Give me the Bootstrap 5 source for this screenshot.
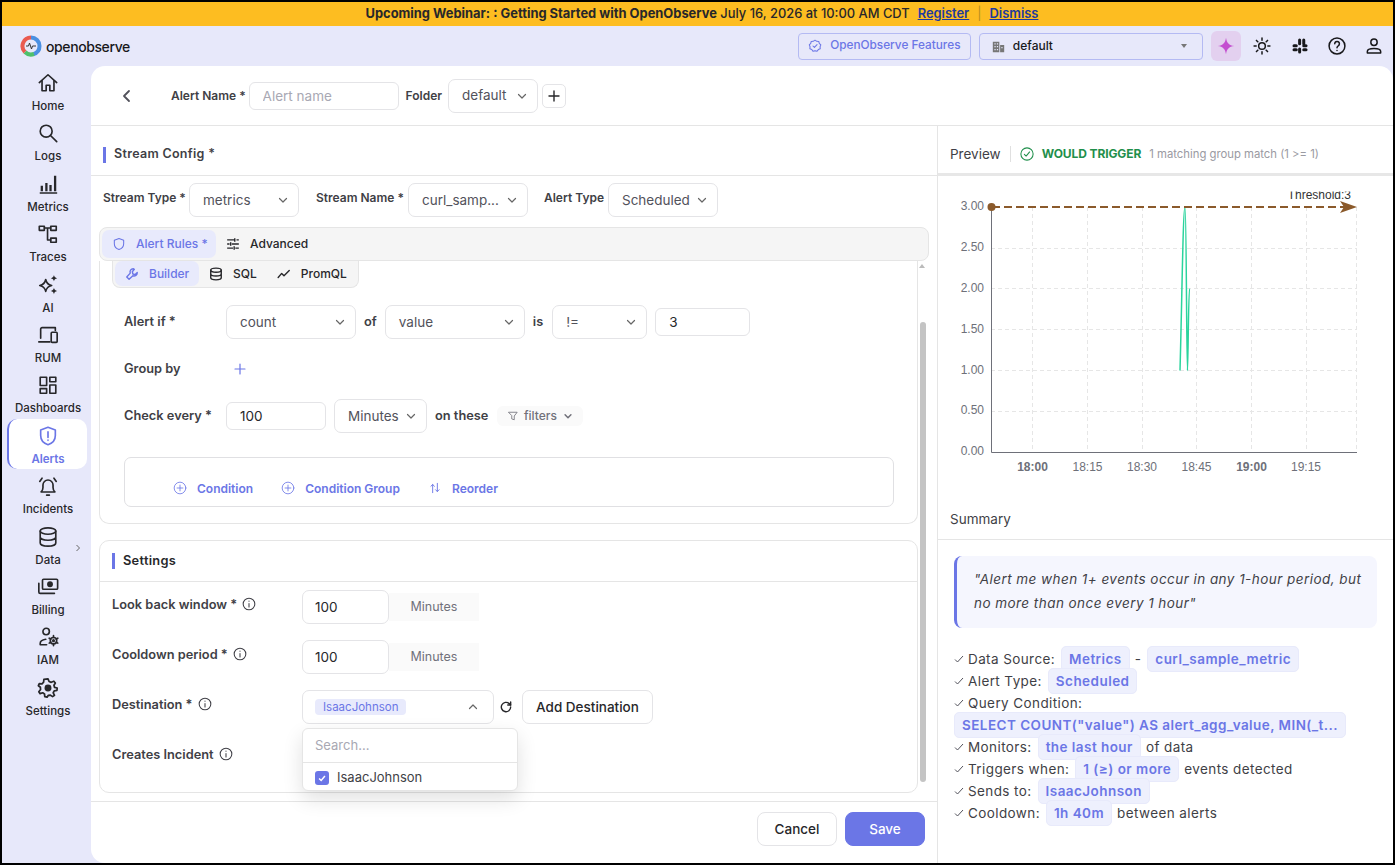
<!DOCTYPE html>
<html lang="en">
<head>
    <meta charset="UTF-8">
    <meta name="viewport" content="width=device-width, initial-scale=1.0">
    <title>Add Alert - OpenObserve</title>
    <link href="https://cdn.jsdelivr.net/npm/bootstrap@5.3.0/dist/css/bootstrap.min.css" rel="stylesheet">
    <style>
        html, body { margin: 0; height: 100%; background: #000; overflow: hidden; }
        body { font-family: Inter, "Liberation Sans", sans-serif; font-size: 13px; color: #3f3f46; }
        svg { display: block; flex: none; }
        .ic { fill: none; stroke: currentColor; stroke-width: 1.8; stroke-linecap: round; stroke-linejoin: round; }

        .app-frame { width: 1395px; height: 865px; border: 2px solid #000; background: #e7e8fa; overflow: hidden; }
        .promo-bar { height: 24px; padding-left: 9px; background: #fdbd21; color: #27272a; font-size: 12.9px; font-weight: 500; }
        .promo-bar b { font-weight: 700; }
        .promo-bar a { color: #1e3a9e; font-weight: 600; }
        .promo-sep { color: #b98d22; font-weight: 400; }

        .top-row { height: 40px; padding-left: 18px; }
        .brand-name { font-size: 14px; font-weight: 500; color: #18181b; letter-spacing: -.4px; margin-left: 4px; }
        .feature-btn { width: 173px; height: 27px; border: 1px solid #b4baf3; border-radius: 4px; color: #6b76e6; font-size: 11.8px; font-weight: 500; margin-right: 8px; }
        .org-pick { width: 224px; height: 27px; border: 1px solid #b4baf3; border-radius: 4px; padding: 0 15px 0 12px; font-size: 12px; font-weight: 500; color: #18181b; margin-right: 8px; }
        .org-pick svg { margin-right: 8px; }
        .caret-down { width: 0; height: 0; border-left: 3.5px solid transparent; border-right: 3.5px solid transparent; border-top: 4px solid #777; }
        .ai-btn { width: 30px; height: 30px; border-radius: 6px; background: #e3d0ef; margin-right: 3px; }
        .top-icon { width: 37.3px; color: #18181b; }

        .side-rail { width: 89px; flex: none; }
        .rail-item { width: 80px; height: 50.4px; margin-left: 5px; color: #27272a; font-size: 11.5px; font-weight: 500; line-height: 14px; position: relative; border-radius: 10px; border-left: 2px solid transparent; padding-top: 6px; }
        .rail-item svg { margin-bottom: 5px; }
        .rail-item.on { background: #fff; color: #6b76e6; font-weight: 600; border-left-color: #6b76e6; }
        .rail-more { position: absolute; right: 5px; top: 24px; }

        .main-sheet { background: #fff; border-radius: 14px 14px 0 14px; min-width: 0; }
        .sheet-head { height: 60px; border-bottom: 1px solid #e5e5e5; padding-left: 29px; }
        .fld-label { font-size: 12px; font-weight: 600; color: #3f3f46; white-space: nowrap; }
        .plain-input.form-control { height: 28px; border: 1px solid #e4e4e7; border-radius: 6px; font-size: 13.5px; padding: 0 13px; color: #27272a; box-shadow: none; }
        .plain-input.form-control::placeholder { color: #a8a8b3; }
        .pick-box { height: 34px; border: 1px solid #e4e4e7; border-radius: 7px; background: #fff; font-size: 13.5px; color: #52525b; padding: 0 9px 0 13px; white-space: nowrap; }
        .pick-box svg { stroke-width: 1.2; }
        .plus-btn { width: 24px; height: 24px; border: 1px solid #e4e4e7; border-radius: 5px; color: #27272a; }

        .left-pane { width: 847px; flex: none; border-right: 1px solid #e5e5e5; position: relative; }
        .block-head { height: 50px; border-bottom: 1px solid #e5e5e5; padding-left: 12px; padding-top: 8px; font-size: 12.5px; font-weight: 600; letter-spacing: .3px; }
        .accent-tick { width: 3px; height: 16px; background: #6b76e6; margin-right: 8px; }
        .stream-row { height: 51px; padding-left: 12px; padding-top: 7px; }
        .stream-label { margin-top: 5.5px; }
        .tab-strip { height: 34px; margin: 0 8px; padding: 2px; background: #f5f5f5; border: 1px solid #e5e5e5; border-radius: 8px; }
        .tab-link { height: 28px; border-radius: 7px; padding: 0 10px; font-size: 12px; font-weight: 500; color: #27272a; gap: 10px; white-space: nowrap; }
        .tab-link.on { background: #e8eafc; color: #6b76e6; }
        .rule-card { height: 263px; margin: 0 19px 0 8px; border: 1px solid #e5e5e5; border-top: 0; border-radius: 0 0 10px 10px; padding: 0 24px 0 24px; }
        .rule-card .fld-label, .set-label.fld-label { font-size: 12.8px; }
        .query-tabs { width: 247px; height: 27px; margin-left: -12px; padding: 0 2px 2px; background: #f5f5f5; border: 1px solid #e5e5e5; border-top: 0; border-radius: 0 0 8px 8px; margin-bottom: 17px; }
        .query-tabs .tab-link { height: 25px; }
        .rule-row { height: 34px; margin-bottom: 13px; }
        .rule-label { width: 102px; flex: none; }
        .filter-chip { width: 86px; height: 20px; border-radius: 6px; background: #fafafa; color: #71717a; font-size: 12px; font-weight: 500; gap: 6px; }
        .cond-box { height: 50px; margin-top: 24px; width: 770px; border: 1px solid #e0e0e3; border-radius: 7px; padding: 22px 0 0 48px; color: #6b76e6; font-size: 12px; font-weight: 600; }
        .cond-link { gap: 10px; margin-right: 28px; }

        .settings-card.card { height: 253px; margin: 16px 19px 0 8px; border: 1px solid #e5e5e5; border-radius: 10px; }
        .settings-head { height: 41px; border-bottom: 1px solid #e5e5e5; padding-left: 12px; font-size: 12.8px; font-weight: 600; color: #27272a; letter-spacing: .3px; }
        .settings-body { padding: 8px 12px 0; }
        .set-row { height: 34px; margin-bottom: 16px; }
        .set-label { width: 190px; flex: none; padding-top: 5px; height: 34px; gap: 5px; align-items: flex-start; }
        .set-label svg { margin-top: 2px; }
        .num-input.form-control { width: 87px; height: 34px; border: 1px solid #e4e4e7; border-radius: 7px; font-size: 13.5px; padding: 0 12px; color: #27272a; box-shadow: none; }
        .unit-tag { width: 90px; height: 28px; background: #fafafa; color: #71717a; font-size: 12.5px; }
        .dest-chip { background: #e8eafc; color: #6b76e6; border-radius: 4px; height: 16px; font-size: 11.5px; padding: 0 8px; line-height: 16px; }
        .dest-pick { width: 192px; padding-left: 12px; padding-right: 14px; }
        .add-dest.btn { width: 131px; height: 34px; margin-left: 9px; border: 1px solid #e4e4e7; border-radius: 7px; font-size: 13.5px; font-weight: 500; color: #27272a; padding: 0; }
        .dest-menu { position: absolute; left: 202px; top: 187px; width: 216px; height: 63px; background: #fff; border: 1px solid #e5e5e5; border-radius: 6px; box-shadow: 0 8px 20px rgba(0,0,0,.12); z-index: 5; }
        .menu-search { height: 34px; border-bottom: 1px solid #e5e5e5; padding-left: 12px; color: #a8a8b3; font-size: 13px; }
        .menu-item { height: 28px; padding: 1px 0 0 12px; gap: 8px; font-size: 13px; color: #3f3f46; }
        .menu-check { width: 14px; height: 14px; border-radius: 3px; background: #6b76e6; }

        .foot-row { height: 62px; margin-top: 8px; border-top: 1px solid #e5e5e5; padding: 10px 12px 0 0; gap: 8px; }
        .foot-row .btn { width: 80px; height: 34px; padding: 0; border-radius: 8px; font-size: 13.5px; font-weight: 500; }
        .btn-cancel { border: 1px solid #e4e4e7; color: #27272a; }
        .btn-save { background: #6b76e6; border: 1px solid #6b76e6; color: #fff; }

        .scroll-track { position: absolute; right: 11px; top: 196px; width: 6px; height: 460px; background: #c4c4c4; border-radius: 3px; }
        .scroll-up { position: absolute; right: 12px; top: 138px; width: 0; height: 0; border-left: 3px solid transparent; border-right: 3px solid transparent; border-bottom: 4px solid #bbb; }

        .right-pane { min-width: 0; }
        .pane-head { height: 50px; border-bottom: 3px solid #e7e7e7; padding-left: 12px; padding-top: 9px; }
        .pane-title { font-size: 13.5px; font-weight: 400; color: #3f3f46; }
        .head-sep { width: 1px; height: 16px; background: #e0e0e0; margin: 0 9px; }
        .trigger-ok { color: #1f8f4b; font-size: 12px; font-weight: 700; margin-left: 8px; letter-spacing: -.1px; }
        .trigger-note { color: #9a9aa2; font-size: 11.3px; margin-left: 8px; }
        .chart-wrap { height: 321px; }
        .chart-wrap text { font-family: "Liberation Sans", sans-serif; font-size: 12px; fill: #6e7079; }
        .summary-head { height: 43px; border-bottom: 1px solid #e5e5e5; padding-left: 12px; padding-top: 3px; }
        .quote-box { margin: 16px 16px 0; height: 72px; padding: 11px 14px 0 17px; background: #f5f6fe; border-left: 3px solid #6b76e6; border-radius: 8px; font-style: italic; font-size: 13.5px; line-height: 24px; letter-spacing: .45px; color: #3f3f46; }
        .sum-list { margin: 20px 0 0 16px; font-size: 13.5px; letter-spacing: .4px; color: #3f3f46; }
        .sum-line { height: 22px; white-space: nowrap; }
        .sum-line svg { margin-right: 4px; }
        .sum-chip { background: #eef0fd; border: 1px solid #e8eafb; color: #6b76e6; font-weight: 600; border-radius: 5px; padding: 2px 7px; margin: 0 5px 0 6px; letter-spacing: .45px; }
        .sum-chip.wide { margin-left: 0; }
    </style>
</head>
<body>
    <div class="app-frame d-flex flex-column">
        <div class="promo-bar d-flex align-items-center justify-content-center gap-2 flex-none">
            <span><b>Upcoming Webinar: : Getting Started with OpenObserve</b> July 16, 2026 at 10:00 AM CDT</span>
            <a href="#">Register</a>
            <span class="promo-sep">|</span>
            <a href="#">Dismiss</a>
        </div>

        <div class="top-row d-flex align-items-center">
            <svg width="22" height="22" viewBox="0 0 22 22"><path d="M11 2.500a8.500 8.500 0 0 1 8.500 8.500" fill="none" stroke="#4a90e2" stroke-width="4"/><path d="M19.500 11a8.500 8.500 0 0 1-6 8.100" fill="none" stroke="#4a90e2" stroke-width="4"/><path d="M14 19a8.500 8.500 0 0 1-9 -2" fill="none" stroke="#4fc06b" stroke-width="4"/><path d="M5 17A8.500 8.500 0 0 1 11 2.500" fill="none" stroke="#ea5a4f" stroke-width="4"/><path d="M6 11h2.500l1-3 2 6 1-3H16" fill="none" stroke="#333" stroke-width="1"/></svg>
            <span class="brand-name">openobserve</span>
            <div class="ms-auto d-flex align-items-center feature-btn justify-content-center gap-2">
                <svg width="14" height="14" viewBox="0 0 24 24" class="ic"><path d="M12 2l3 2 3.500.2.800 3.400 2.700 2.400-1.300 3.300.3 3.500-3.300 1.300L15.500 21 12 20l-3.500 1-2-2.900-3.300-1.300.3-3.500L2.200 10l2.500-2.400.8-3.400L9 4z"/><path d="M8.500 12l2.500 2.500 4.500-5"/></svg>
                <span>OpenObserve Features</span>
            </div>
            <div class="org-pick d-flex align-items-center">
                <svg width="13" height="13" viewBox="0 0 16 16" fill="#777"><path d="M1 2h8v13H1zM10 6h5v9h-5z"/><path d="M3 4h1.500v1.500H3zM6 4h1.500v1.500H6zM3 7.500h1.500V9H3zM6 7.500h1.500V9H6zM3 11h1.500v1.500H3zM6 11h1.500v1.500H6zM11.500 8.500H13V10h-1.500z" fill="#e7e8fa"/></svg>
                <span>default</span>
                <span class="caret-down ms-auto"></span>
            </div>
            <div class="ai-btn d-flex align-items-center justify-content-center">
                <svg width="18" height="18" viewBox="0 0 24 24"><path d="M12 1c1 7 4 10 11 11-7 1-10 4-11 11-1-7-4-10-11-11 7-1 10-4 11-11z" fill="#c44ed0"/></svg>
            </div>
            <div class="top-icon d-flex justify-content-center">
                <svg width="20" height="20" viewBox="0 0 24 24" class="ic"><circle cx="12" cy="12" r="4"/><path d="M12 2.500v2.500M12 19v2.500M2.500 12H5M19 12h2.500M5.300 5.300L7 7M17 17l1.700 1.700M5.300 18.700L7 17M17 7l1.700-1.700"/></svg>
            </div>
            <div class="top-icon d-flex justify-content-center">
                <svg width="18" height="18" viewBox="0 0 24 24" fill="#18181b"><rect x="9.500" y="2" width="4" height="9" rx="2"/><rect x="2" y="9.500" width="7" height="4" rx="2"/><rect x="15" y="2" width="4" height="9" rx="2"/><rect x="15" y="9.500" width="7" height="4" rx="2"/><rect x="9.500" y="14" width="4" height="8" rx="2"/><rect x="2" y="15" width="7" height="4" rx="2"/><rect x="15" y="15" width="7" height="4" rx="2"/></svg>
            </div>
            <div class="top-icon d-flex justify-content-center">
                <svg width="20" height="20" viewBox="0 0 24 24" class="ic"><circle cx="12" cy="12" r="9.500"/><path d="M9.300 9.300a2.800 2.800 0 1 1 4.300 2.400c-1 .7-1.600 1.200-1.600 2.500"/><path d="M12 17.300v.2"/></svg>
            </div>
            <div class="top-icon d-flex justify-content-center">
                <svg width="20" height="20" viewBox="0 0 24 24" class="ic"><circle cx="12" cy="7.500" r="3.800"/><path d="M4 20.500v-2c0-2 3-3.500 8-3.500s8 1.500 8 3.500v2z"/></svg>
            </div>
        </div>

        <div class="d-flex flex-grow-1" style="min-height:0">
            <nav class="side-rail">
                <div class="rail-item d-flex flex-column align-items-center">
                    <svg width="22" height="22" viewBox="0 0 24 24" class="ic"><path d="M2.500 11.500L12 3l9.500 8.500"/><path d="M5.500 9.500V20.500h4.500v-6h4v6h4.500V9.500"/></svg>Home
                </div>
                <div class="rail-item d-flex flex-column align-items-center">
                    <svg width="22" height="22" viewBox="0 0 24 24" class="ic"><circle cx="10" cy="10" r="6.500"/><path d="M15 15l6.500 6.500"/></svg>Logs
                </div>
                <div class="rail-item d-flex flex-column align-items-center">
                    <svg width="22" height="22" viewBox="0 0 24 24" fill="#27272a"><path d="M3 21h19v1.600H3zM4 14h2.500v6H4zM9 11h2.500v9H9zM13.500 13H16v7h-2.500zM18.500 3H21v17h-2.500z"/></svg>Metrics
                </div>
                <div class="rail-item d-flex flex-column align-items-center">
                    <svg width="22" height="22" viewBox="0 0 24 24" class="ic"><rect x="2.500" y="3.500" width="5.500" height="4.500"/><rect x="15" y="3.500" width="6" height="4.500"/><rect x="15" y="16.500" width="6" height="4.500"/><path d="M8 5.500h7M11.500 5.500V18.500H15"/></svg>Traces
                </div>
                <div class="rail-item d-flex flex-column align-items-center">
                    <svg width="22" height="22" viewBox="0 0 24 24"><path d="M9.500 6c.8 4 2.500 5.700 6.500 6.500-4 .8-5.700 2.500-6.500 6.500-.8-4-2.500-5.700-6.500-6.500C7 11.700 8.700 10 9.500 6z" fill="none" stroke="#27272a" stroke-width="1.800" stroke-linejoin="round"/><path d="M18.500 1c.4 2 1.300 3 3.500 3.500-2.200.5-3.100 1.500-3.500 3.500-.4-2-1.300-3-3.500-3.500 2.200-.5 3.100-1.500 3.500-3.500zM18.500 15c.4 2 1.300 3 3.500 3.500-2.200.5-3.100 1.500-3.500 3.500-.4-2-1.300-3-3.500-3.500 2.200-.5 3.100-1.500 3.500-3.500z" fill="#27272a"/></svg>AI
                </div>
                <div class="rail-item d-flex flex-column align-items-center">
                    <svg width="22" height="22" viewBox="0 0 24 24" class="ic"><path d="M4 15.500V5.500c0-.8.700-1.500 1.500-1.500H20v3"/><path d="M2 19.500h12"/><rect x="15.500" y="9" width="6.500" height="11" rx="1"/></svg>RUM
                </div>
                <div class="rail-item d-flex flex-column align-items-center">
                    <svg width="22" height="22" viewBox="0 0 24 24" class="ic"><rect x="3.500" y="3.500" width="7" height="9"/><rect x="14" y="3.500" width="6.500" height="5"/><rect x="3.500" y="16" width="7" height="5"/><rect x="14" y="12" width="6.500" height="9"/></svg>Dashboards
                </div>
                <div class="rail-item on d-flex flex-column align-items-center">
                    <svg width="22" height="22" viewBox="0 0 24 24" class="ic"><path d="M12 2.500l8 3v6c0 5-3.300 8.500-8 10-4.700-1.500-8-5-8-10v-6z"/><path d="M12 7.500v6M12 16.500v.2"/></svg>Alerts
                </div>
                <div class="rail-item d-flex flex-column align-items-center">
                    <svg width="22" height="22" viewBox="0 0 24 24" class="ic"><path d="M4.500 18.500c1.500-1.500 2-2.500 2-5V11a5.500 5.500 0 0 1 11 0v2.500c0 2.500.5 3.500 2 5z"/><path d="M10.500 22h3M5.500 3.500L3 7M18.500 3.500L21 7"/></svg>Incidents
                </div>
                <div class="rail-item d-flex flex-column align-items-center">
                    <svg width="22" height="22" viewBox="0 0 24 24" class="ic"><ellipse cx="12" cy="5.500" rx="8.500" ry="3.500"/><path d="M3.500 5.500v13c0 2 3.800 3.500 8.500 3.500s8.500-1.500 8.500-3.500v-13M3.500 12c0 2 3.800 3.500 8.500 3.500s8.500-1.500 8.500-3.500"/></svg>Data
                    <svg class="rail-more" width="8" height="8" viewBox="0 0 8 8"><path d="M2.500 1L5.500 4 2.500 7" fill="none" stroke="#666" stroke-width="1"/></svg>
                </div>
                <div class="rail-item d-flex flex-column align-items-center">
                    <svg width="22" height="22" viewBox="0 0 24 24" class="ic"><rect x="6" y="3.500" width="16.500" height="11" rx="1.200"/><circle cx="14.200" cy="9" r="2.300" fill="#27272a"/><path d="M2 8v9.500c0 1 .7 1.500 1.500 1.500H19"/></svg>Billing
                </div>
                <div class="rail-item d-flex flex-column align-items-center">
                    <svg width="22" height="22" viewBox="0 0 24 24" class="ic"><circle cx="10" cy="6" r="3.500"/><path d="M3.500 20.500v-1.500c0-2.500 2.500-4 6-4.500M3.500 20.500h7"/><circle cx="18" cy="16" r="3.500"/><circle cx="18" cy="16" r=".8"/><path d="M18 10.500v2M18 19.500v2M13.300 13.300l1.700 1M21 17.700l1.700 1M13.300 18.700l1.700-1M21 14.300l1.700-1"/></svg>IAM
                </div>
                <div class="rail-item d-flex flex-column align-items-center">
                    <svg width="22" height="22" viewBox="0 0 24 24"><path d="M12 2l1.200 2.900 2.300.9L18.400 4.600 20 6.500 18.500 9l.6 2.300L22 12l-.2 2.500-3 .6-1.100 2.100 1.400 2.800-2.100 1.400-2.400-1.600-2.400.3L11 22l-2.500-.5-.3-3-2-1.300-2.800 1L2 16l1.900-2.400-.2-2.400L1.500 9.500l1-2.300 3 .2 1.700-1.700L7.500 2.700z" fill="none" stroke="#27272a" stroke-width="1.900" stroke-linejoin="round"/><circle cx="12" cy="12" r="3.800" fill="#27272a"/></svg>Settings
                </div>
            </nav>

            <main class="main-sheet flex-grow-1 d-flex flex-column">
                <div class="sheet-head d-flex align-items-center">
                    <svg width="14" height="14" viewBox="0 0 14 14" class="ic" style="color:#52525b"><path d="M9 2L4 7l5 5"/></svg>
                    <span class="fld-label" style="margin-left:37px">Alert Name *</span>
                    <input class="form-control plain-input" style="width:150px;margin-left:3px" placeholder="Alert name">
                    <span class="fld-label" style="margin:0 6px 0 7px">Folder</span>
                    <div class="pick-box d-flex align-items-center justify-content-between" style="width:90px"><span>default</span><svg width="12" height="12" viewBox="0 0 12 12" class="ic" style="color:#666"><path d="M2.500 4.500L6 8l3.500-3.500"/></svg></div>
                    <div class="plus-btn d-flex align-items-center justify-content-center ms-1"><svg width="12" height="12" viewBox="0 0 12 12" class="ic" style="stroke-width:1.400"><path d="M6 1v10M1 6h10"/></svg></div>
                </div>

                <div class="d-flex flex-grow-1" style="min-height:0">
                    <section class="left-pane">
                        <div class="block-head d-flex align-items-center"><span class="accent-tick"></span>Stream Config *</div>

                        <div class="stream-row d-flex align-items-start">
                            <span class="fld-label stream-label" style="width:86px">Stream Type *</span>
                            <div class="pick-box d-flex align-items-center justify-content-between" style="width:110px"><span>metrics</span><svg width="12" height="12" viewBox="0 0 12 12" class="ic" style="color:#666"><path d="M2.500 4.500L6 8l3.500-3.500"/></svg></div>
                            <span class="fld-label stream-label" style="margin-left:17px;width:92px">Stream Name *</span>
                            <div class="pick-box d-flex align-items-center justify-content-between gap-1" style="width:120px"><span>curl_samp...</span><svg width="12" height="12" viewBox="0 0 12 12" class="ic" style="color:#666"><path d="M2.500 4.500L6 8l3.500-3.500"/></svg></div>
                            <span class="fld-label stream-label" style="margin-left:16px;width:64px">Alert Type</span>
                            <div class="pick-box d-flex align-items-center justify-content-between" style="width:110px"><span>Scheduled</span><svg width="12" height="12" viewBox="0 0 12 12" class="ic" style="color:#666"><path d="M2.500 4.500L6 8l3.500-3.500"/></svg></div>
                        </div>

                        <div class="tab-strip d-flex">
                            <div class="tab-link on d-flex align-items-center" style="width:114px">
                                <svg width="14" height="14" viewBox="0 0 24 24" class="ic"><path d="M12 2.500l8 3v6c0 5-3.300 8.500-8 10-4.700-1.500-8-5-8-10v-6z"/></svg><span>Alert Rules *</span>
                            </div>
                            <div class="tab-link d-flex align-items-center">
                                <svg width="14" height="14" viewBox="0 0 24 24" class="ic" style="stroke-linecap:butt;stroke-width:2.400"><path d="M2 5h12M18 5h4M15 2v6M2 12h4M10 12h12M8 9v6M2 19h10M16 19h6M14 16v6"/></svg><span>Advanced</span>
                            </div>
                        </div>

                        <div class="rule-card">
                            <div class="query-tabs d-flex">
                                <div class="tab-link on d-flex align-items-center" style="width:84px">
                                    <svg width="14" height="14" viewBox="0 0 24 24" class="ic" style="stroke-width:2.400"><path d="M14 3a5.500 5.500 0 0 0-5 7.500L3 17l4 4 6.500-6A5.500 5.500 0 0 0 21 9.500l-3.500 3.500-4-1-1-4L16 4z"/></svg><span>Builder</span>
                                </div>
                                <div class="tab-link d-flex align-items-center">
                                    <svg width="14" height="14" viewBox="0 0 24 24" class="ic" style="stroke-width:2.400"><ellipse cx="12" cy="5.500" rx="9" ry="3.500"/><path d="M3 5.500v13c0 2 4 3.500 9 3.500s9-1.500 9-3.500v-13M3 12c0 2 4 3.500 9 3.500s9-1.500 9-3.500"/></svg><span>SQL</span>
                                </div>
                                <div class="tab-link d-flex align-items-center">
                                    <svg width="14" height="14" viewBox="0 0 24 24" class="ic" style="stroke-width:2.400"><path d="M2 18l6-7 4 4 9-9"/></svg><span>PromQL</span>
                                </div>
                            </div>

                            <div class="rule-row d-flex align-items-center">
                                <span class="fld-label rule-label">Alert if *</span>
                                <div class="pick-box d-flex align-items-center justify-content-between" style="width:130px"><span>count</span><svg width="12" height="12" viewBox="0 0 12 12" class="ic" style="color:#666"><path d="M2.500 4.500L6 8l3.500-3.500"/></svg></div>
                                <span class="fld-label" style="margin:0 8px">of</span>
                                <div class="pick-box d-flex align-items-center justify-content-between" style="width:140px"><span>value</span><svg width="12" height="12" viewBox="0 0 12 12" class="ic" style="color:#666"><path d="M2.500 4.500L6 8l3.500-3.500"/></svg></div>
                                <span class="fld-label" style="margin:0 9px 0 8px">is</span>
                                <div class="pick-box d-flex align-items-center justify-content-between" style="width:95px"><span>!=</span><svg width="12" height="12" viewBox="0 0 12 12" class="ic" style="color:#666"><path d="M2.500 4.500L6 8l3.500-3.500"/></svg></div>
                                <input class="form-control plain-input" style="width:95px;margin-left:8px" value="3">
                            </div>

                            <div class="rule-row d-flex align-items-center">
                                <span class="fld-label rule-label">Group by</span>
                                <svg width="12" height="12" viewBox="0 0 12 12" class="ic" style="color:#6b76e6;margin-left:8px;stroke-width:1.200"><path d="M6 1v10M1 6h10"/></svg>
                            </div>

                            <div class="rule-row d-flex align-items-center" style="margin-bottom:0">
                                <span class="fld-label rule-label">Check every *</span>
                                <input class="form-control plain-input" style="width:100px" value="100">
                                <div class="pick-box d-flex align-items-center justify-content-between ms-2" style="width:93px"><span>Minutes</span><svg width="12" height="12" viewBox="0 0 12 12" class="ic" style="color:#666"><path d="M2.500 4.500L6 8l3.500-3.500"/></svg></div>
                                <span class="fld-label" style="margin:0 9px 0 8px">on these</span>
                                <div class="filter-chip d-flex align-items-center justify-content-center">
                                    <svg width="10" height="10" viewBox="0 0 12 12" class="ic" style="stroke-width:1"><path d="M1 1.500h10L7.500 6v4.500l-3-1V6z"/></svg><span>filters</span><svg width="10" height="10" viewBox="0 0 12 12" class="ic"><path d="M2.500 4.500L6 8l3.500-3.500"/></svg>
                                </div>
                            </div>

                            <div class="cond-box d-flex">
                                <div class="cond-link d-flex align-items-start">
                                    <svg width="14" height="14" viewBox="0 0 24 24" class="ic" style="stroke-width:1.400;margin-top:1px"><circle cx="12" cy="12" r="10"/><path d="M12 7v10M7 12h10"/></svg><span>Condition</span>
                                </div>
                                <div class="cond-link d-flex align-items-start">
                                    <svg width="14" height="14" viewBox="0 0 24 24" class="ic" style="stroke-width:1.400;margin-top:1px"><circle cx="12" cy="12" r="10"/><path d="M12 7v10M7 12h10"/></svg><span>Condition Group</span>
                                </div>
                                <div class="cond-link d-flex align-items-start">
                                    <svg width="14" height="14" viewBox="0 0 24 24" class="ic" style="stroke-width:1.600;margin-top:1px"><path d="M8 20V6M5 9l3-3 3 3M16 4v14M13 15l3 3 3-3"/></svg><span>Reorder</span>
                                </div>
                            </div>
                        </div>

                        <div class="settings-card card position-relative">
                            <div class="settings-head d-flex align-items-center"><span class="accent-tick"></span>Settings</div>
                            <div class="settings-body">
                                <div class="set-row d-flex">
                                    <div class="set-label fld-label d-flex"><span>Look back window *</span><svg width="14" height="14" viewBox="0 0 24 24" class="ic"><circle cx="12" cy="12" r="10"/><path d="M12 11v6M12 7v.2"/></svg></div>
                                    <input class="form-control num-input" value="100">
                                    <div class="unit-tag d-flex align-items-center justify-content-center align-self-center">Minutes</div>
                                </div>
                                <div class="set-row d-flex">
                                    <div class="set-label fld-label d-flex"><span>Cooldown period *</span><svg width="14" height="14" viewBox="0 0 24 24" class="ic"><circle cx="12" cy="12" r="10"/><path d="M12 11v6M12 7v.2"/></svg></div>
                                    <input class="form-control num-input" value="100">
                                    <div class="unit-tag d-flex align-items-center justify-content-center align-self-center">Minutes</div>
                                </div>
                                <div class="set-row d-flex">
                                    <div class="set-label fld-label d-flex"><span>Destination *</span><svg width="14" height="14" viewBox="0 0 24 24" class="ic"><circle cx="12" cy="12" r="10"/><path d="M12 11v6M12 7v.2"/></svg></div>
                                    <div class="pick-box dest-pick d-flex align-items-center justify-content-between"><span class="dest-chip">IsaacJohnson</span><svg width="12" height="12" viewBox="0 0 12 12" class="ic" style="color:#666"><path d="M2.500 7.500L6 4l3.500 3.500"/></svg></div>
                                    <svg width="14" height="14" viewBox="0 0 24 24" class="ic align-self-center" style="margin-left:5px;stroke-width:2.400;color:#27272a"><path d="M20 12a8 8 0 1 1-2.500-5.800L20 8.500"/><path d="M20 3.500v5h-5"/></svg>
                                    <button class="btn add-dest" type="button">Add Destination</button>
                                </div>
                                <div class="set-row d-flex">
                                    <div class="set-label fld-label d-flex"><span>Creates Incident</span><svg width="14" height="14" viewBox="0 0 24 24" class="ic"><circle cx="12" cy="12" r="10"/><path d="M12 11v6M12 7v.2"/></svg></div>
                                </div>
                            </div>
                            <div class="dest-menu">
                                <div class="menu-search d-flex align-items-center">Search...</div>
                                <div class="menu-item d-flex align-items-center">
                                    <span class="menu-check d-flex align-items-center justify-content-center"><svg width="10" height="10" viewBox="0 0 12 12" fill="none" stroke="#fff" stroke-width="1.800"><path d="M2.500 6.500L5 9l4.500-5.500"/></svg></span>
                                    <span>IsaacJohnson</span>
                                </div>
                            </div>
                        </div>

                        <div class="foot-row d-flex align-items-start justify-content-end">
                            <button class="btn btn-cancel" type="button">Cancel</button>
                            <button class="btn btn-save" type="button">Save</button>
                        </div>

                        <span class="scroll-up"></span>
                        <span class="scroll-track"></span>
                    </section>

                    <section class="right-pane flex-grow-1">
                        <div class="pane-head d-flex align-items-center">
                            <span class="pane-title">Preview</span>
                            <span class="head-sep"></span>
                            <svg width="14" height="14" viewBox="0 0 24 24" class="ic" style="color:#1f8f4b"><circle cx="12" cy="12" r="10.500"/><path d="M7.500 12.500l3 3 6-7"/></svg>
                            <span class="trigger-ok">WOULD TRIGGER</span>
                            <span class="trigger-note">1 matching group match (1 &gt;= 1)</span>
                        </div>

                        <div class="chart-wrap">
                            <svg width="455" height="321" viewBox="938 176 455 321">
                                <g stroke="#e6e6e6" stroke-dasharray="4 3" fill="none">
                                    <path d="M991 248.500H1357M991 288.500H1357M991 329.500H1357M991 370.500H1357M991 411.500H1357"/>
                                    <path d="M1032.500 207V452M1087.500 207V452M1142.500 207V452M1196.500 207V452M1251.500 207V452M1306.500 207V452M1356.500 207V452"/>
                                </g>
                                <path d="M991.500 207V452.500H1357" fill="none" stroke="#6e7079"/>
                                <path d="M1180 370.500C1182 300 1183 207 1185 207 1186.500 207 1186.500 370.500 1187.500 370.500 1188 370.500 1188.500 288.500 1189.500 288.500" fill="none" stroke="#2bd49d" stroke-width="1.500"/>
                                <path d="M992 207H1346" stroke="#8b5a2b" stroke-width="2" stroke-dasharray="8 4" fill="none"/>
                                <circle cx="991.500" cy="207" r="4" fill="#8b5a2b"/>
                                <path d="M1340 201l17 6-17 6 4-6z" fill="#8b5a2b"/>
                                <clipPath id="labelClip"><rect x="1280" y="191.500" width="80" height="10"/></clipPath>
                                <text x="1351" y="199" text-anchor="end" clip-path="url(#labelClip)" style="fill:#333">Threshold:3</text>
                                <g text-anchor="end">
                                    <text x="984" y="210">3.00</text>
                                    <text x="984" y="251">2.50</text>
                                    <text x="984" y="292">2.00</text>
                                    <text x="984" y="333">1.50</text>
                                    <text x="984" y="374">1.00</text>
                                    <text x="984" y="414">0.50</text>
                                    <text x="984" y="455">0.00</text>
                                </g>
                                <g text-anchor="middle">
                                    <text x="1032.500" y="471" style="font-weight:700">18:00</text>
                                    <text x="1087.500" y="471">18:15</text>
                                    <text x="1142" y="471">18:30</text>
                                    <text x="1196.500" y="471">18:45</text>
                                    <text x="1251.500" y="471" style="font-weight:700">19:00</text>
                                    <text x="1306" y="471">19:15</text>
                                </g>
                            </svg>
                        </div>

                        <div class="summary-head d-flex align-items-center"><span class="pane-title">Summary</span></div>
                        <div class="quote-box">"Alert me when 1+ events occur in any 1-hour period, but no more than once every 1 hour"</div>
                        <div class="sum-list">
                            <div class="sum-line d-flex align-items-center"><svg width="10" height="10" viewBox="0 0 10 10" fill="none" stroke="#52525b"><path d="M1 5.500L3.500 8 9 2"/></svg>Data Source: <span class="sum-chip">Metrics</span> - <span class="sum-chip">curl_sample_metric</span></div>
                            <div class="sum-line d-flex align-items-center"><svg width="10" height="10" viewBox="0 0 10 10" fill="none" stroke="#52525b"><path d="M1 5.500L3.500 8 9 2"/></svg>Alert Type: <span class="sum-chip">Scheduled</span></div>
                            <div class="sum-line d-flex align-items-center"><svg width="10" height="10" viewBox="0 0 10 10" fill="none" stroke="#52525b"><path d="M1 5.500L3.500 8 9 2"/></svg>Query Condition:</div>
                            <div class="sum-line d-flex align-items-center"><span class="sum-chip wide">SELECT COUNT("value") AS alert_agg_value, MIN(_t...</span></div>
                            <div class="sum-line d-flex align-items-center"><svg width="10" height="10" viewBox="0 0 10 10" fill="none" stroke="#52525b"><path d="M1 5.500L3.500 8 9 2"/></svg>Monitors: <span class="sum-chip">the last hour</span> of data</div>
                            <div class="sum-line d-flex align-items-center"><svg width="10" height="10" viewBox="0 0 10 10" fill="none" stroke="#52525b"><path d="M1 5.500L3.500 8 9 2"/></svg>Triggers when: <span class="sum-chip">1 (≥) or more</span> events detected</div>
                            <div class="sum-line d-flex align-items-center"><svg width="10" height="10" viewBox="0 0 10 10" fill="none" stroke="#52525b"><path d="M1 5.500L3.500 8 9 2"/></svg>Sends to: <span class="sum-chip">IsaacJohnson</span></div>
                            <div class="sum-line d-flex align-items-center"><svg width="10" height="10" viewBox="0 0 10 10" fill="none" stroke="#52525b"><path d="M1 5.500L3.500 8 9 2"/></svg>Cooldown: <span class="sum-chip">1h 40m</span> between alerts</div>
                        </div>
                    </section>
                </div>
            </main>
        </div>
    </div>
    <script src="https://cdn.jsdelivr.net/npm/bootstrap@5.3.0/dist/js/bootstrap.bundle.min.js"></script>
</body>
</html>
